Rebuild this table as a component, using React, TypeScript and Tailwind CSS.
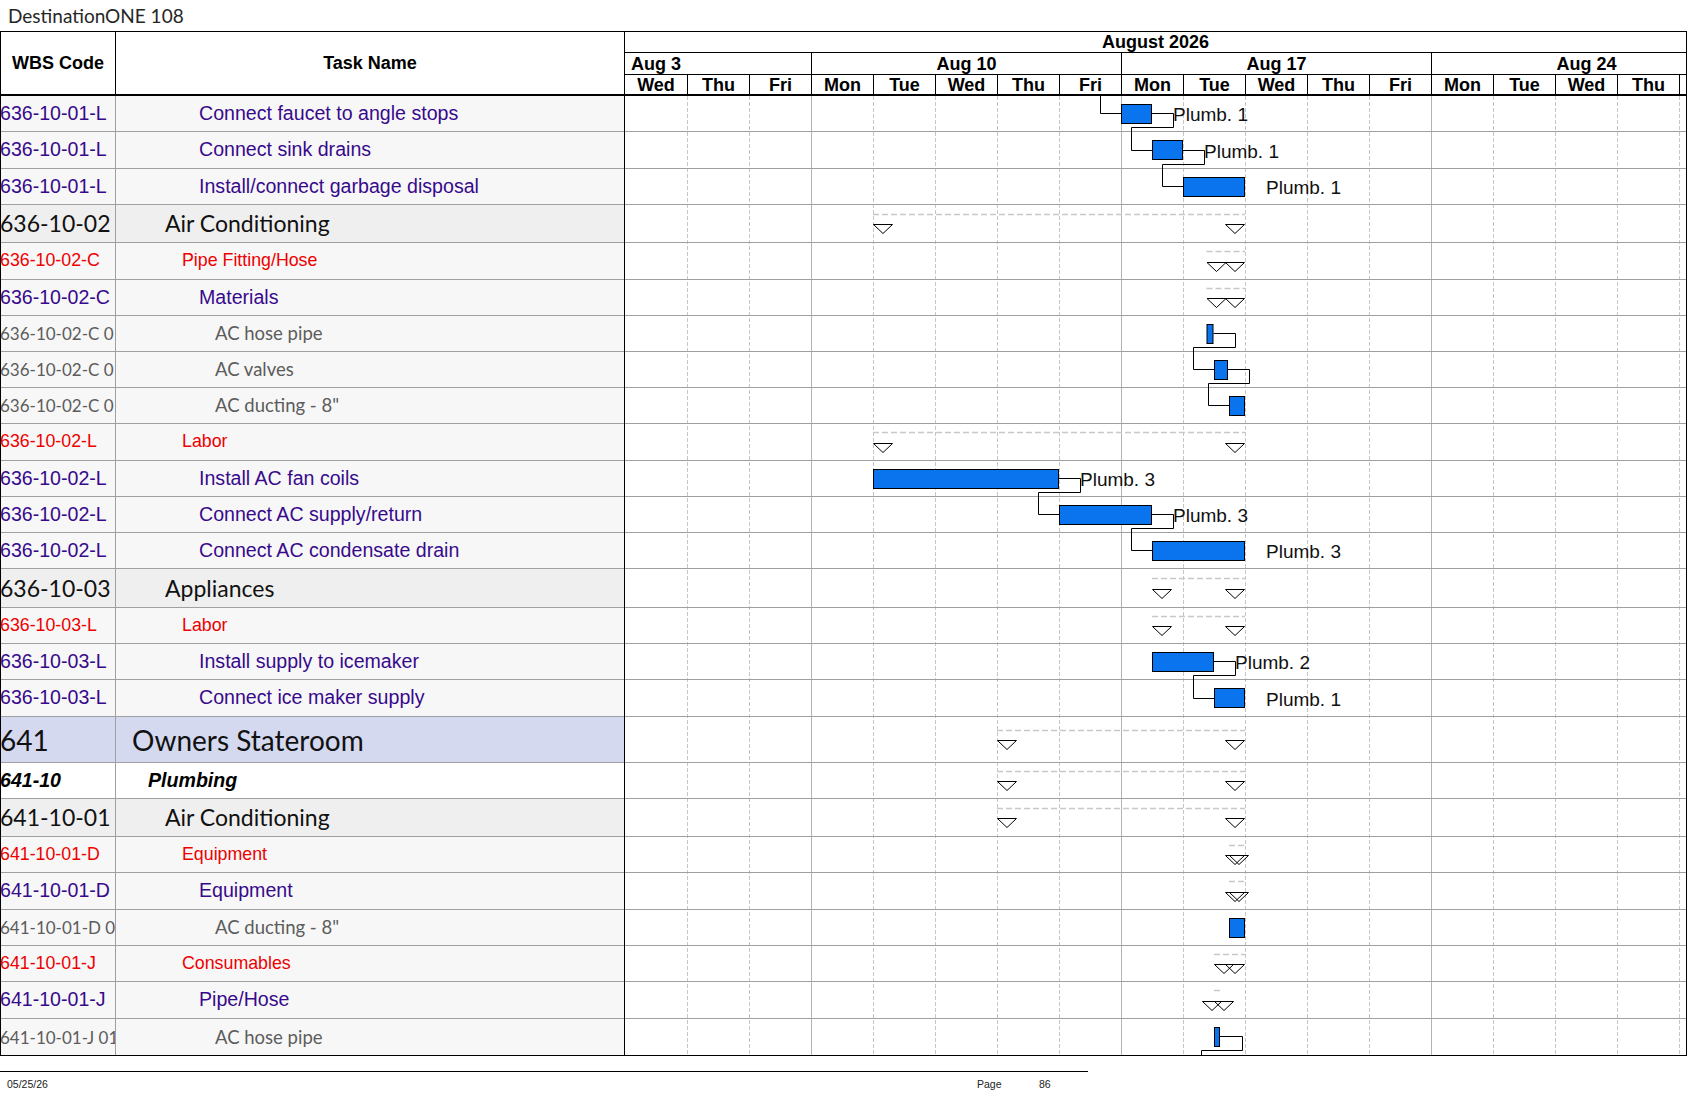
import React from 'react';

type RowT = 'task' | 'red' | 'gray' | 'l3' | 'l1' | 'l2';

const ARIAL = "font-['Liberation_Sans',Arial,sans-serif]";
const LATO = "font-['Lato','Noto_Sans',sans-serif]";

const rows: { wbs: string; name: string; t: RowT; h: number }[] = [
  { wbs: '636-10-01-L', name: 'Connect faucet to angle stops', t: 'task', h: 36 },
  { wbs: '636-10-01-L', name: 'Connect sink drains', t: 'task', h: 37 },
  { wbs: '636-10-01-L', name: 'Install/connect garbage disposal', t: 'task', h: 36 },
  { wbs: '636-10-02', name: 'Air Conditioning', t: 'l3', h: 38 },
  { wbs: '636-10-02-C', name: 'Pipe Fitting/Hose', t: 'red', h: 37 },
  { wbs: '636-10-02-C', name: 'Materials', t: 'task', h: 36 },
  { wbs: '636-10-02-C 01', name: 'AC hose pipe', t: 'gray', h: 36 },
  { wbs: '636-10-02-C 01', name: 'AC valves', t: 'gray', h: 36 },
  { wbs: '636-10-02-C 01', name: 'AC ducting - 8"', t: 'gray', h: 36 },
  { wbs: '636-10-02-L', name: 'Labor', t: 'red', h: 37 },
  { wbs: '636-10-02-L', name: 'Install AC fan coils', t: 'task', h: 36 },
  { wbs: '636-10-02-L', name: 'Connect AC supply/return', t: 'task', h: 36 },
  { wbs: '636-10-02-L', name: 'Connect AC condensate drain', t: 'task', h: 36 },
  { wbs: '636-10-03', name: 'Appliances', t: 'l3', h: 39 },
  { wbs: '636-10-03-L', name: 'Labor', t: 'red', h: 36 },
  { wbs: '636-10-03-L', name: 'Install supply to icemaker', t: 'task', h: 36 },
  { wbs: '636-10-03-L', name: 'Connect ice maker supply', t: 'task', h: 37 },
  { wbs: '641', name: 'Owners Stateroom', t: 'l1', h: 46 },
  { wbs: '641-10', name: 'Plumbing', t: 'l2', h: 36 },
  { wbs: '641-10-01', name: 'Air Conditioning', t: 'l3', h: 38 },
  { wbs: '641-10-01-D', name: 'Equipment', t: 'red', h: 36 },
  { wbs: '641-10-01-D', name: 'Equipment', t: 'task', h: 37 },
  { wbs: '641-10-01-D 01', name: 'AC ducting - 8"', t: 'gray', h: 36 },
  { wbs: '641-10-01-J', name: 'Consumables', t: 'red', h: 36 },
  { wbs: '641-10-01-J', name: 'Pipe/Hose', t: 'task', h: 37 },
  { wbs: '641-10-01-J 01', name: 'AC hose pipe', t: 'gray', h: 36 },
];

const HCLASS: Record<number, string> = {
  36: 'h-[36px]',
  37: 'h-[37px]',
  38: 'h-[38px]',
  39: 'h-[39px]',
  46: 'h-[46px]',
};

const STY: Record<RowT, { font: string; wbsFont: string; bg: string; indent: string }> = {
  task: {
    font: `${ARIAL} text-[19.6px] text-[#370a8c]`,
    wbsFont: '',
    bg: 'bg-[#f7f7f7]',
    indent: 'pl-[83px]',
  },
  red: {
    font: `${ARIAL} text-[17.8px] text-[#ee0000]`,
    wbsFont: '',
    bg: 'bg-[#f7f7f7]',
    indent: 'pl-[66px]',
  },
  gray: {
    font: `${LATO} text-[18.5px] text-[#5c5c5c]`,
    wbsFont: 'text-[17px]',
    bg: 'bg-[#f7f7f7]',
    indent: 'pl-[99px]',
  },
  l3: {
    font: `${LATO} text-[23px] text-[#111111]`,
    wbsFont: '',
    bg: 'bg-[#efefef]',
    indent: 'pl-[49px]',
  },
  l1: {
    font: `${LATO} text-[28px] text-[#111111]`,
    wbsFont: '',
    bg: 'bg-[#d4d9f0]',
    indent: 'pl-[16px]',
  },
  l2: {
    font: `${ARIAL} text-[19.6px] font-bold italic text-black`,
    wbsFont: '',
    bg: 'bg-white',
    indent: 'pl-[32px]',
  },
};

const tops: number[] = [];
let acc = 0;
rows.forEach((r) => {
  tops.push(acc);
  acc += r.h;
});
const BODY_H = acc;

const cy = (i: number) => tops[i] + rows[i].h / 2;
const mid = (i: number) => Math.round(cy(i) - 1) + 0.5;

const bars: Record<number, { s: number; e: number; label?: string }> = {
  0: { s: 496, e: 527, label: 'Plumb. 1' },
  1: { s: 527, e: 558, label: 'Plumb. 1' },
  2: { s: 558, e: 620, label: 'Plumb. 1' },
  6: { s: 581.5, e: 588.5 },
  7: { s: 589, e: 603 },
  8: { s: 604, e: 620 },
  10: { s: 248, e: 434, label: 'Plumb. 3' },
  11: { s: 434, e: 527, label: 'Plumb. 3' },
  12: { s: 527, e: 620, label: 'Plumb. 3' },
  15: { s: 527, e: 589, label: 'Plumb. 2' },
  16: { s: 589, e: 620, label: 'Plumb. 1' },
  22: { s: 604, e: 620 },
  25: { s: 589, e: 595 },
};

const links = [0, 1, 6, 7, 10, 11, 15];

const summaries: Record<number, { s: number; e: number }> = {
  3: { s: 248, e: 620 },
  4: { s: 581.5, e: 620 },
  5: { s: 581.5, e: 620 },
  9: { s: 248, e: 620 },
  13: { s: 527, e: 620 },
  14: { s: 527, e: 620 },
  17: { s: 372, e: 620 },
  18: { s: 372, e: 620 },
  19: { s: 372, e: 620 },
  20: { s: 604, e: 620 },
  21: { s: 604, e: 620 },
  23: { s: 589, e: 620 },
  24: { s: 589, e: 597 },
};

const days = ['Wed', 'Thu', 'Fri', 'Mon', 'Tue', 'Wed', 'Thu', 'Fri', 'Mon', 'Tue', 'Wed', 'Thu', 'Fri', 'Mon', 'Tue', 'Wed', 'Thu', 'Fri'];

function GanttBody() {
  const W = 1061;
  const els: React.ReactNode[] = [];
  for (let d = 1; d <= 17; d++) {
    const x = 62 * d + 0.5;
    const solid = d === 3 || d === 8 || d === 13;
    els.push(
      <line
        key={`v${d}`}
        x1={x}
        x2={x}
        y1={0}
        y2={BODY_H}
        stroke={solid ? '#b4b4b4' : '#c6c6c6'}
        strokeWidth={1}
        strokeDasharray={solid ? undefined : '4 2'}
      />
    );
  }
  rows.forEach((r, i) => {
    if (i === rows.length - 1) return;
    const y = tops[i] + r.h - 0.5;
    els.push(<line key={`h${i}`} x1={0} x2={W} y1={y} y2={y} stroke="#a0a0a0" strokeWidth={1} />);
  });
  Object.entries(summaries).forEach(([k, v]) => {
    const i = Number(k);
    const dy = Math.round(cy(i) - 10.5) + 0.5;
    const ty = Math.round(cy(i)) + 0.5;
    els.push(
      <line key={`sd${i}`} x1={v.s} x2={v.e} y1={dy} y2={dy} stroke="#c8c8c8" strokeWidth={1.5} strokeDasharray="6 3" />
    );
    els.push(
      <polygon
        key={`st${i}`}
        points={`${v.s + 0.5},${ty} ${v.s + 19.5},${ty} ${v.s + 10},${ty + 9}`}
        fill="none"
        stroke="#000"
        strokeWidth={1}
      />
    );
    els.push(
      <polygon
        key={`se${i}`}
        points={`${v.e - 19.5},${ty} ${v.e - 0.5},${ty} ${v.e - 10},${ty + 9}`}
        fill="none"
        stroke="#000"
        strokeWidth={1}
      />
    );
  });
  els.push(
    <polyline key="lin" points={`475.5,0 475.5,${mid(0)} 496,${mid(0)}`} fill="none" stroke="#000" strokeWidth={1} />
  );
  links.forEach((i) => {
    const a = bars[i];
    const b = bars[i + 1];
    const y1 = mid(i);
    const yb = tops[i] + rows[i].h - 5 + 0.5;
    const y2 = mid(i + 1);
    const x1 = Math.round(a.e + 21) + 0.5;
    const x2 = Math.round(b.s - 21) + 0.5;
    els.push(
      <polyline
        key={`l${i}`}
        points={`${a.e},${y1} ${x1},${y1} ${x1},${yb} ${x2},${yb} ${x2},${y2} ${b.s},${y2}`}
        fill="none"
        stroke="#000"
        strokeWidth={1}
      />
    );
  });
  {
    const i = 25;
    const y1 = mid(i);
    const yb = BODY_H - 4.5;
    els.push(
      <polyline
        key="lout"
        points={`595,${y1} 617.5,${y1} 617.5,${yb} 576.5,${yb} 576.5,${BODY_H}`}
        fill="none"
        stroke="#000"
        strokeWidth={1}
      />
    );
  }
  Object.entries(bars).forEach(([k, b]) => {
    const i = Number(k);
    const y = Math.round(cy(i) - 10.5) + 0.5;
    els.push(
      <rect key={`b${i}`} x={b.s + 0.5} y={y} width={Math.max(b.e - b.s - 1, 1)} height={19} fill="#0a74ee" stroke="#000" strokeWidth={1} />
    );
    if (b.label) {
      els.push(
        <text
          key={`t${i}`}
          x={b.e + 21}
          y={mid(i) + 7}
          fontFamily="'Liberation Sans', Arial, sans-serif"
          fontSize={19}
          fill="#111"
        >
          {b.label}
        </text>
      );
    }
  });
  return (
    <svg width={W} height={BODY_H} className="block">
      {els}
    </svg>
  );
}

export default function App() {
  return (
    <div className="w-[1687px] bg-white text-black">
      <div className={`h-[31px] flex items-center pl-[8px] ${LATO} text-[19px] leading-none text-[#262626]`}>
        DestinationONE 108
      </div>

      <div className="flex h-[65px] border-t border-b-2 border-black">
        <div className={`w-[624px] flex border-l border-black ${ARIAL} font-bold text-[18px] leading-none`}>
          <div className="w-[115px] border-r border-black flex items-center justify-center">WBS Code</div>
          <div className="flex-1 flex items-center justify-center">Task Name</div>
        </div>
        <div className={`w-[1063px] border-l border-r border-black overflow-hidden flex flex-col ${ARIAL} font-bold text-[18px] leading-none`}>
          <div className="h-[21px] flex-none border-b border-black flex items-center justify-center">August 2026</div>
          <div className="h-[22px] flex-none border-b border-black flex">
            <div className="w-[186px] flex-none flex items-center pl-[6px]">Aug 3</div>
            <div className="w-[310px] flex-none border-l border-black flex items-center justify-center">Aug 10</div>
            <div className="w-[310px] flex-none border-l border-black flex items-center justify-center">Aug 17</div>
            <div className="w-[310px] flex-none border-l border-black flex items-center justify-center">Aug 24</div>
          </div>
          <div className="h-[19px] flex-none flex">
            {days.map((d, i) => (
              <div
                key={i}
                className={`w-[62px] flex-none flex items-center justify-center ${i === 0 ? '' : 'border-l border-black'}`}
              >
                {d}
              </div>
            ))}
          </div>
        </div>
      </div>

      <div className="flex border-b border-black">
        <div className="w-[624px] border-l border-black flex flex-col">
          {rows.map((r, i) => {
            const s = STY[r.t];
            const last = i === rows.length - 1;
            return (
              <div
                key={i}
                className={`flex flex-none ${HCLASS[r.h]} ${s.bg} ${last ? '' : 'border-b border-[#a0a0a0]'} ${s.font} leading-none whitespace-nowrap`}
              >
                <div className={`w-[115px] flex-none border-r border-[#a0a0a0] flex items-center overflow-hidden ${s.wbsFont}`}>
                  <span className="ml-[-1px]">{r.wbs}</span>
                </div>
                <div className={`flex-1 flex items-center overflow-hidden ${s.indent}`}>{r.name}</div>
              </div>
            );
          })}
        </div>
        <div className="w-[1063px] border-l border-r border-black bg-white">
          <GanttBody />
        </div>
      </div>

      <div className={`mt-[15px] w-[1088px] border-t border-black h-[26px] flex items-center ${ARIAL} text-[10.5px] leading-none text-[#222222]`}>
        <span className="w-[977px] flex-none pl-[7px]">05/25/26</span>
        <span className="w-[62px] flex-none">Page</span>
        <span>86</span>
      </div>
    </div>
  );
}
